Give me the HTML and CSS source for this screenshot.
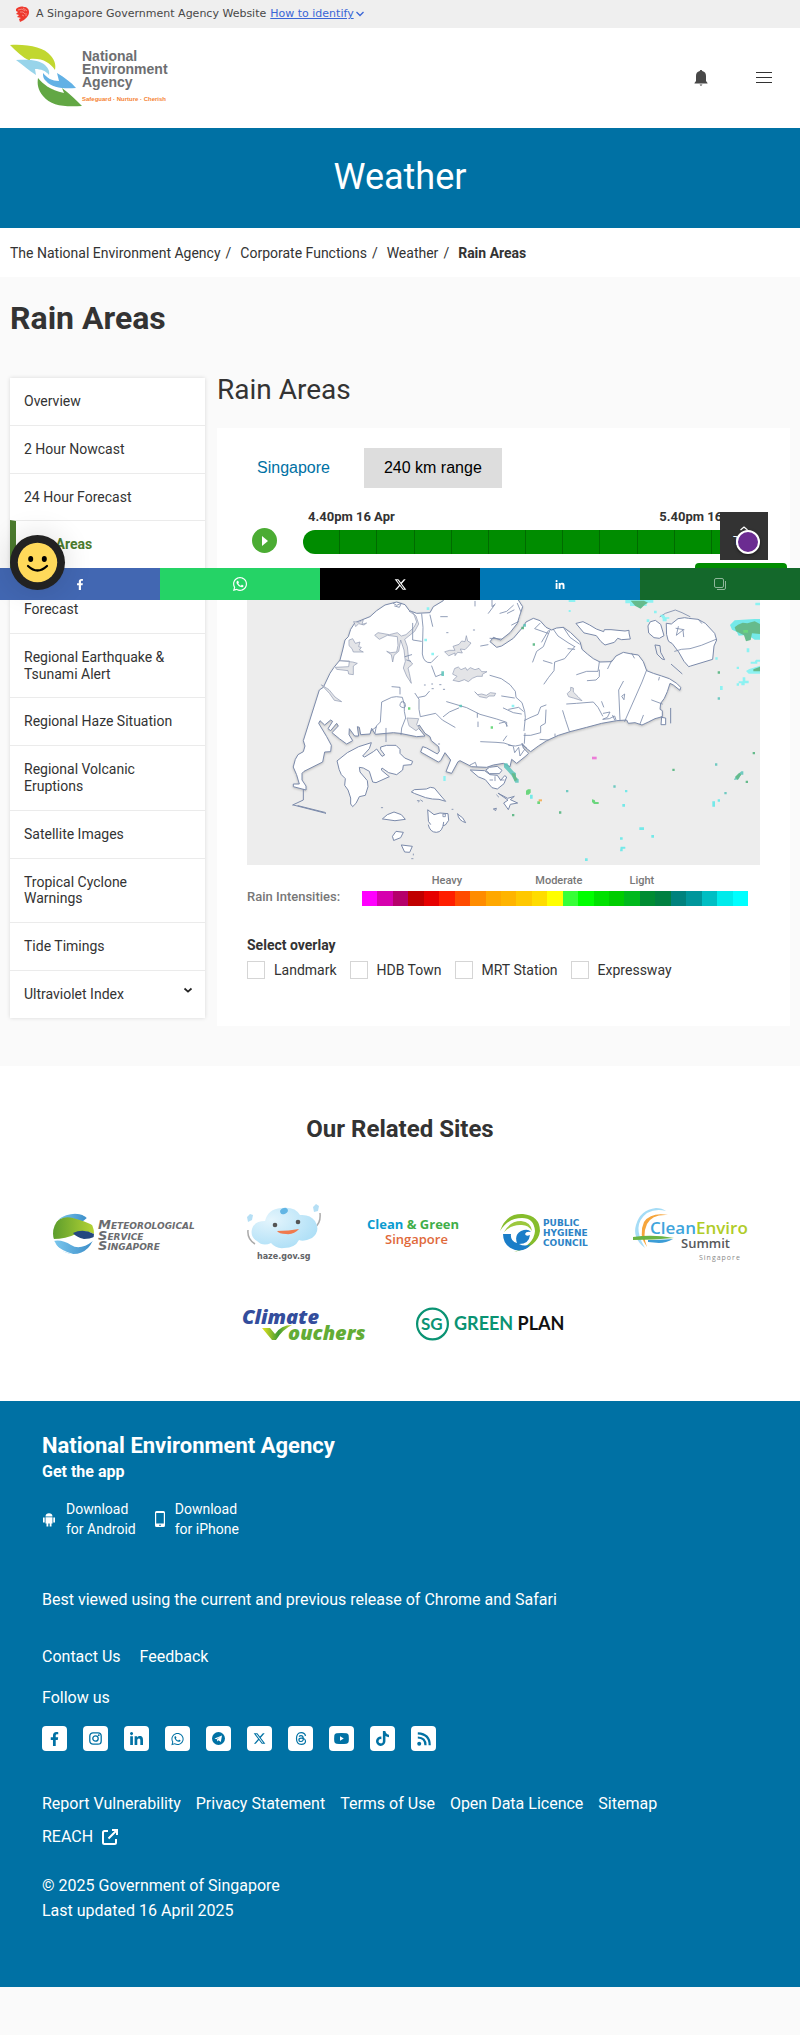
FILE: index.html
```html
<!DOCTYPE html>
<html lang="en">
<head>
<meta charset="utf-8">
<meta name="viewport" content="width=device-width, initial-scale=1">
<title>Rain Areas - National Environment Agency</title>
<link rel="stylesheet" href="styles.css">
</head>
<body>
<svg class="sprite" aria-hidden="true">
  <symbol id="i-facebook" viewBox="0 0 320 512"><path d="M279.14 288l14.22-92.66h-88.91v-60.13c0-25.35 12.42-50.06 52.24-50.06h40.42V6.26S260.43 0 225.36 0c-73.22 0-121.08 44.38-121.08 124.72v70.62H22.89V288h81.39v224h100.17V288z"/></symbol>
  <symbol id="i-whatsapp" viewBox="0 0 448 512"><path d="M380.9 97.1C339 55.1 283.2 32 223.9 32c-122.4 0-222 99.6-222 222 0 39.1 10.2 77.3 29.6 111L0 480l117.7-30.9c32.4 17.7 68.9 27 106.1 27h.1c122.3 0 224.1-99.6 224.1-222 0-59.3-25.2-115-67.1-157zm-157 341.6c-33.2 0-65.7-8.9-94-25.7l-6.7-4-69.8 18.3L72 359.2l-4.4-7c-18.5-29.4-28.2-63.3-28.2-98.2 0-101.7 82.8-184.5 184.6-184.5 49.3 0 95.6 19.2 130.4 54.1 34.8 34.9 56.2 81.2 56.1 130.5 0 101.8-84.9 184.6-186.6 184.6zm101.2-138.2c-5.5-2.8-32.8-16.2-37.9-18-5.1-1.9-8.8-2.8-12.5 2.8-3.7 5.6-14.3 18-17.6 21.8-3.2 3.7-6.5 4.2-12 1.4-32.6-16.3-54-29.1-75.5-66-5.7-9.8 5.7-9.1 16.3-30.3 1.8-3.7.9-6.9-.5-9.7-1.4-2.8-12.5-30.1-17.1-41.2-4.5-10.8-9.1-9.3-12.5-9.5-3.2-.2-6.9-.2-10.6-.2-3.7 0-9.7 1.4-14.8 6.9-5.1 5.6-19.4 19-19.4 46.3 0 27.3 19.9 53.7 22.6 57.4 2.8 3.7 39.1 59.7 94.8 83.8 35.2 15.2 49 16.5 66.6 13.9 10.7-1.6 32.8-13.4 37.4-26.4 4.6-13 4.6-24.1 3.2-26.4-1.3-2.5-5-3.9-10.5-6.6z"/></symbol>
  <symbol id="i-x" viewBox="0 0 512 512"><path d="M389.2 48h70.6L305.6 224.2 487 464H345L233.7 318.6 106.5 464H35.8L200.7 275.5 26.8 48H172.4L272.9 180.9 389.2 48zM364.4 421.8h39.1L151.1 88h-42L364.4 421.8z"/></symbol>
  <symbol id="i-linkedin" viewBox="0 0 448 448"><path d="M100.28 448H7.4V148.9h92.88zM53.79 108.1C24.09 108.1 0 83.5 0 53.8a53.79 53.79 0 0 1 107.58 0c0 29.7-24.1 54.3-53.79 54.3zM447.9 448h-92.68V302.4c0-34.7-.7-79.2-48.29-79.2-48.29 0-55.69 37.7-55.69 76.7V448h-92.78V148.9h89.08v40.8h1.3c12.4-23.5 42.69-48.3 87.88-48.3 94 0 111.28 61.9 111.28 142.3V448z"/></symbol>
  <symbol id="i-tiktok" viewBox="0 0 448 512"><path d="M448,209.91a210.06,210.06,0,0,1-122.77-39.25V349.38A162.55,162.55,0,1,1,185,188.31V278.2a74.62,74.62,0,1,0,52.23,71.18V0l88,0a121.18,121.18,0,0,0,1.86,22.17h0A122.18,122.18,0,0,0,381,102.39a121.43,121.43,0,0,0,67,20.14Z"/></symbol>
</svg>

<div class="gov-banner">
  <svg class="lion" viewBox="0 0 14 16" aria-hidden="true"><path d="M1 3C3 1 6 0 9 1c3 0 5 2 5 5 0 4-3 6-5 8l-4 2-1-3 2-1-4-1 2-2-3-1 2-2-2-1z" fill="#ee3a2e"/><path d="M3 4l4-1 3 2M5 6l3 0 2 2M7 9l2 1M8 2l4 3M11 7l0 3" stroke="#f8a9a0" fill="none" stroke-width=".7"/></svg>
  <span>A Singapore Government Agency Website</span>
  <a href="#identify">How to identify<svg class="chev" viewBox="0 0 8 6" aria-hidden="true"><path d="M.5 1L4 4.500 7.500 1" fill="none" stroke="#3a66d6" stroke-width="1.300"/></svg></a>
</div>

<header class="site-header">
  <a href="#home" aria-label="National Environment Agency home">
    <svg class="nea-logo" viewBox="0 0 164 64">
      <path d="M0 0C18-1 34 2 41 11c4 5 5 9 4 14-5-7-12-12-25-11v2C12 12 6 6 0 0z" fill="#c1d72f"/>
      <path d="M6 15c13-1 24 0 29 5 3 3 5 6 4 10-3-4-8-6-14-6l1 6C18 25 13 20 6 15z" fill="#98d4ea"/>
      <path d="M47 28c8 5 14 9 19 15-12 1-24 0-30-7-3-3-3-5-3-8 4 5 9 8 16 8z" fill="#62b1e5"/>
      <path d="M28 33c5 6 12 12 26 15l-2-5c8 6 14 12 20 18-18 1-31 0-39-10-5-6-6-12-5-18z" fill="#62a744"/>
      <g fill="#6d6e71" font-family="'Liberation Sans',Arial,sans-serif" font-weight="700" font-size="14"><text x="72" y="16">National</text><text x="72" y="29">Environment</text><text x="72" y="42">Agency</text></g>
      <text x="72" y="56" fill="#f58233" font-family="'Liberation Sans',Arial,sans-serif" font-weight="700" font-size="6">Safeguard · Nurture · Cherish</text>
    </svg>
  </a>
  <div class="header-tools">
    <button class="icon-btn" type="button" aria-label="Alerts"><svg width="14" height="16" viewBox="0 0 14 16"><path d="M7 0c.8 0 1.200.4 1.200 1.100C11 1.700 12 3.800 12 6v5l1.500 2v.5H.5V13L2 11V6C2 3.800 3 1.700 5.800 1.100 5.800.4 6.200 0 7 0zM5.500 14.500h3L7 16z" fill="#484848"/></svg></button>
    <button class="icon-btn" type="button" aria-label="Menu"><svg width="16" height="12" viewBox="0 0 16 12"><path d="M0 0h16v1H0zM0 5h16v1H0zM0 10h16v1H0z" fill="#333" shape-rendering="crispEdges"/></svg></button>
  </div>
</header>

<div class="hero">Weather</div>

<nav class="crumbs" aria-label="Breadcrumb">
  <ol>
    <li><a href="#home">The National Environment Agency</a></li>
    <li><a href="#functions">Corporate Functions</a></li>
    <li><a href="#weather">Weather</a></li>
    <li><b>Rain Areas</b></li>
  </ol>
</nav>

<main class="main">
  <h1>Rain Areas</h1>
  <div class="columns">
    <nav class="side" aria-label="Weather">
      <ul>
        <li><a href="#overview">Overview</a></li>
        <li><a href="#2h">2 Hour Nowcast</a></li>
        <li><a href="#24h">24 Hour Forecast</a></li>
        <li class="current"><a href="#rain">Rain Areas</a></li>
        <li><a href="#regional">Regional Weather Forecast</a></li>
        <li><a href="#earthquake">Regional Earthquake &amp; Tsunami Alert</a></li>
        <li><a href="#haze">Regional Haze Situation</a></li>
        <li><a href="#volcanic">Regional Volcanic Eruptions</a></li>
        <li><a href="#satellite">Satellite Images</a></li>
        <li><a href="#cyclone">Tropical Cyclone Warnings</a></li>
        <li><a href="#tide">Tide Timings</a></li>
        <li class="has-sub"><a href="#uv">Ultraviolet Index</a><svg class="sub-chev" viewBox="0 0 10 7" aria-hidden="true"><path d="M1.500 1.500L5 4.700l3.500-3.200" fill="none" stroke="#222" stroke-width="1.700"/></svg></li>
      </ul>
    </nav>

    <section class="content">
      <h2>Rain Areas</h2>
      <div class="panel">
        <div class="tabs">
          <button class="tab" type="button">Singapore</button>
          <button class="tab active" type="button">240 km range</button>
        </div>
        <div class="timeline">
          <button class="play" type="button" aria-label="Play"><svg width="6" height="10" viewBox="0 0 6 10"><path d="M0 0l6 5-6 5z" fill="#fff"/></svg></button>
          <div class="track">
            <div class="times"><span>4.40pm 16 Apr</span><span>5.40pm 16 Apr</span></div>
            <div class="bar"><i></i><i></i><i></i><i></i><i></i><i></i><i></i><i></i><i></i><i></i><i></i><i></i></div>
            <span class="bubble"></span>
          </div>
        </div>

        <svg class="map" viewBox="0 0 1539 864" role="img" aria-label="Rain map of Singapore">
          <rect width="1539" height="864" fill="#ededed"/>
          <g transform="translate(-51 39)" stroke-linejoin="round" stroke-linecap="round">
            <g fill="#fff" stroke="#7b8aaa" stroke-width="3">
              <path class="coast" d="M190 530L196 508 204 494 220 485 225 468 220 452 268 300 280 292 300 250 312 232 330 210 338 180 345 150 355 140 362 118 375 98 395 90 420 80 440 62 465 45 500 36 525 44 538 62 560 70 600 68 610 50 640 32 640 -40 860 -40 865 30 878 50 868 80 862 100 840 128 812 150 790 142 780 155 800 172 815 168 850 145 880 110 888 96 910 85 930 92 948 112 965 120 980 114 1000 112 1022 128 1050 155 1056 178 1072 192 1090 206 1110 216 1145 215 1158 198 1180 187 1205 192 1225 195 1240 215 1250 242 1270 250 1295 258 1318 266 1340 280 1352 292 1350 301 1330 285 1320 280 1312 305 1303 325 1292 340 1290 358 1297 362 1297 380 1275 386 1255 396 1236 405 1215 398 1195 400 1190 390 1160 392 1115 400 1070 412 1020 425 985 436 950 452 925 468 902 485 888 474 876 460 880 474 896 490 885 500 860 520 845 508 840 530 820 520 790 525 770 532 725 530 690 512 684 515 665 550 648 545 662 510 645 488 632 512 625 516 572 486 578 470 590 474 622 492 628 484 626 470 604 452 600 440 585 430 568 405 562 410 585 438 560 440 510 430 490 428 436 433 425 415 420 432 392 434 388 412 382 410 386 438 374 438 358 416 357 434 368 452 350 462 328 446 306 428 325 408 320 400 302 422 294 416 308 394 302 390 284 405 270 392 266 400 290 440 304 466 302 485 284 486 278 516 222 544 216 550 216 570 228 588 228 600 190 590 190 582 208 582 200 555z"/>
              <path d="M322 512l30-24 34-18 38-12-6 18-20 22 6 3 26-16 10-8 16 22 8-4-12-16 0-8 18-5 28 0 12 12 0 12 14 14 24 10-4 10-24 2-2 14-18 14-24-6-20-14-2 6 14 12 10 8-40 18-10-2-10-32-18-10-12-2 2 14 22 26 2 18-8 26-18 4-10 20-10 10-6-8 0-18-8-24-10-14 2-20-12-12-6-14z"/>
              <path d="M545 605l8-6 36-2 12-5 12 2 20 24 14 16-20-6-20-1-20-4-32-12z"/><path d="M594 660l18 14 18-5 24 2 2 20-10 14-20 6-20-2-10-14z"/><path d="M595 705q5 22 24 22t22-30M683 672q18 10 24 26-22-6-24-26"/>
              <path d="M458 686l14-12 20-8 22 8 12 14-30 4zM488 738l10-14 22 3-8 16-20 8zM515 765l32 4-8 18-14-1z"/>
              <path d="M722 540l42 2 16 12 22 2 10 15 12-14 6 4-8 20-20 16-16-4-20-24-20-8zM768 540l10-8 24-3 14 12-8 10-28 0z"/>
              <path d="M1039 100l20-5 20 10 20 12 22 8 2-6 20 0 42 4 12-2 0 8 4 18-26 2-12-4-10 12-28 8-12-10-14-18-36-8z"/>
              <path d="M1262 95l14-4 16 12 6 20 4 14-14 8-16-2-16-14-2-20z"/>
              <path d="M1310 100l14 2 20-16 20-3 12 2 28 3 22 12 28 30 6 20-8 18-4 40-66 20-6 2-14-16-16-28-20-26-8-4-4-6-4-16z"/>
              <path d="M1276 165l14 2 2 20 12 22-8-2-14-14zM1324 223l32 28M188 645l32-15 0-32M190 645l98 25-4-3-80-20" fill="none"/>
              <path d="M1295 380l-2 24h14l0-20-14-2M1322 355v44M805 610l28 15 20-6-12 10 22 10-22 4-6 16-14-20 12-8zM798 655l-8 2 6 4z"/>
            </g>
            <g fill="#e3e4e7" stroke="#8c97b0" stroke-width="2">
              <path d="M538 64l14 10 8 22-8 16-24 22-14 4-12-10-24 6-34-6-10 8 14 12 24-12 30 4 2 26-4 20-18 2-12-4 14 10 4 22 4-20 14-12 6-34 10 30 4 34-6 20 10 24 14 22-6-30-4-16 14-12-12-14-4-38-8-22 30-24 12-22-8-24-12-12z"/>
              <path d="M328 212l40 4 14 4-12 8 0 26-14-2-2-10-34-4-4-6 40-2 2-16z"/>
              <path d="M358 150l10-4 8 14 14-4-4 14 8 2-6 8 12 6-30 0-4-10-8-8z"/>
              <path d="M645 185l14-4 16 0-6-12 18-6 8-10 10 2 4-18 4 16 10 6-8 10-10 10-14-2 6 12-14-2-8 10 0-8-18 8zM675 235l10-4 8 8 14-6 4 8 10-8 14 6 12-4 8 10 16 0-14 8 0 6-16 0-14 6-12 10-12-6-16 6-18-4 12-12-12-6z"/>
              <path d="M735 306l8 8 12-2 14 4 12-8 16 2-4 8-16 0-8 6-20-4zM372 95l14 2 14-8-4 14 14-4-8 6-16-4-8 8zM532 384l34 2-6 18 8 10-10 8-20-14zM275 285l22 14 18 22 20 14-22-4-14-20zM1022 300l0-8 8 2 0 12 14 14 12 12-26-8-14-4-4-8z"/>
            </g>
            <g fill="none" stroke="#7b8aaa" stroke-width="2.500">
              <path d="M575 72l4 40-2 80q4 28 26 26l20-20M605 228l12 32 20-8M548 100v50l26 4"/>
              <path d="M435 430l4-22 12-12 4-60 30-14 14-2 18 2 6 22 0 20 4 20-12 30-2 20M468 455l0-40M486 290l24 2 0 20M514 336q10-4 12 8t-10 8-2-16"/>
              <path d="M780 256l34 10 26 18 16 20 2 18 18 16 8 26 2 18-4 40M815 318l38 6M820 354l30 14 24 4M836 358l30-6 14 12M555 310l12 18 0 30 4 22 46-10 20 20 38 22M566 322l20-4 12-14M650 335l60 18 40 20 50 14 30 10 0 12M640 380l18-14 28-12M752 455l46 2 24 2 24 8"/>
              <path d="M742 370v12M744 396v14M808 400l16-4 8 12M820 452l10-14M836 466l20 2 20-4 14 10M850 470l4 18 12-16 4 26 14-20M632 80l20 0M600 75l8 34M735 34v14M775 70l18-24M786 30l0 20 10-8M810 70l20-6 20-18"/>
              <path d="M752 168l22-4M780 145l34 2M832 70l20-10M845 105l20-10"/>
              <path d="M960 120l-20 50-20 14-12 32M930 100l-16 16 40 14M955 122l-20 34M970 118l14 20 30 20 20 12M1000 112l20 30 28 20M1034 170l-14 16-16 20-30 10-2 26-16 20-14 20M1034 178l-20-2M940 212l26 8M1108 216l-4 28-34 0-30 10M1108 240l0 20-10 10-26 2M1145 212l-12 24"/>
              <path d="M1250 240l-14 36-52 118M1180 274l-14 26 4 90M1176 318l8-6-2 16zM1240 376l-10 26M1265 330l32 12M1288 262l-2 8M1205 190l8 14M1010 342l30-2 50-4 14 16 14 26M998 362l8 26 12 36M948 345l-16 6-8 22-24 10-16 8M948 360l-2 40-14 8 0 20-30 8-20 0"/>
              <path d="M1120 370l20-4-8 16-14 6 20-2 16-8 4 12M1115 335l6 16M1148 376l6 14M1334 184l20-6 26-2 34-10 44-18M1338 115l24 4M1345 110l-6 26 20-16 2 20M1290 80l16-10 30-10 20 8 24 12M1405 88l10 12M930 448l24 2M975 432v6M885 430l-2 30M862 40l10 24M490 40l10 6 14-6-6 12-14-4M525 200l20-6M530 210l12 4"/>
              <path d="M650 128h4M730 120h4M583 285h3M605 282h3M606 296h4M629 284h4M640 298h4M454 653h4M666 658h3M545 806h4M550 792v3M625 462h4M562 632h6l-2 4M572 630l6 4M720 525l16-8 4 12M780 570h8M795 560v12M812 570h10M440 410l-16 12M640 672h6v8h-6zM800 615l6 6"/>
            </g>
            <g opacity=".85">
              <path fill="#7df3f3" d="M590 52h8v8h-8zM583 146h8v8h-8zM604 188h8v8h-8zM845 344h8v8h-8zM640 558h7v15h-7zM1016 60h6v6h-6zM1016 30h20v6h-20zM1186 30h84v8h-20v10h-50v-8h-14zM1250 88h8v8h-8zM1272 62h8v8h-8zM1290 74h12l4 8h12v4h-8v8h-12v-8zM1456 202h7v7h-7zM1470 288h8v12h-8zM1562 215h12l4-6h14v6h-10v6h-20zM1548 243l10-6 32-10v24h-34zM1538 262h8v10h10v8h-12v6h-10v-6h-8v-6h12zM1520 280h7v7h-7zM1520 230h7v7h-7zM1550 175h8v12h-8zM1576 38h14v8h-14z"/>
              <path fill="#5fe9e9" d="M1500 105l14-14 60-4h16v62h-16l-12-8-16-6-20 2-6-12-14-6zM900 614h8v12h-8zM1185 600h7v7h-7zM1177 642h8v8h-8zM1264 735h8v8h-8zM1170 742h8v7h-8zM1065 805h8v8h-8zM1172 770h14v6h-8v8h-8zM1228 712h14v8h-14zM1447 634h8v16h-8zM1463 628h7v7h-7z"/>
              <path fill="#5bc4ba" d="M1534 544h6v10h-8l-6 14-14 2 4-10zM1008 600h7v7h-7zM1150 586h7v7h-7zM1455 520h7v7h-7zM1483 606h7v7h-7zM1463 322h7v7h-7zM688 344h8v8h-8zM634 244h8v14h-8zM880 102h8v8h-8zM822 520h10l6 10 12 14 8 6v12l8 6v10h-10l-6-12-6-10-12-14-10-10z"/>
              <path fill="#4fb37c" d="M1514 112l10-8 14-6 14 2 22-6 16 8v30l-24-2-4 20-14 4-6-18-24-12zM1202 32h40l12 6-10 6-12 12-16-8zM908 160h7v7h-7zM1463 244h7v7h-7zM1327 536h7v7h-7zM1547 572h7v7h-7zM1568 486h7v7h-7zM987 664h7v7h-7zM846 672h7v7h-7zM1516 560l12-12 6 6-12 16zM844 550h10l8 20-8 4zM874 110h8v8h-8zM1570 238l20-8v14h-20z"/>
              <path fill="#55d26a" d="M888 602l6-4h8v10l-6 6h-8zM1086 628l8 2 2 6h10v6h-14l-6-6zM534 352h7v7h-7zM782 409h7v7h-7zM922 634h8v8h-8zM1540 120h14v8h-14z"/>
              <path fill="#ec6ad5" d="M1086 500h14v8h-14z"/><path fill="#f5a84a" d="M926 628h10v6h-10z"/>
            </g>
          </g>
        </svg>

        <div class="legend">
          <div class="legend-title">Rain Intensities:</div>
          <div>
            <div class="levels"><span>Heavy</span><span>Moderate</span><span>Light</span></div>
            <div class="scale">
              <i style="background:#f0f"></i><i style="background:#d600ae"></i><i style="background:#b5006a"></i><i style="background:#c00000"></i><i style="background:#e60000"></i><i style="background:#ff1e00"></i><i style="background:#ff4b00"></i><i style="background:#ff8c00"></i><i style="background:#ffa800"></i><i style="background:#ffb400"></i><i style="background:#ffc800"></i><i style="background:#ffdc00"></i><i style="background:#ff0"></i><i style="background:#37ff37"></i><i style="background:#0f0"></i><i style="background:#00e100"></i><i style="background:#00cd00"></i><i style="background:#00b91c"></i><i style="background:#008c32"></i><i style="background:#008041"></i><i style="background:#00827d"></i><i style="background:#00969b"></i><i style="background:#00bec3"></i><i style="background:#00ebeb"></i><i style="background:#0ff"></i>
            </div>
          </div>
        </div>

        <fieldset class="overlay">
          <legend>Select overlay</legend>
          <div class="checks">
            <label><input type="checkbox">Landmark</label>
            <label><input type="checkbox">HDB Town</label>
            <label><input type="checkbox">MRT Station</label>
            <label><input type="checkbox">Expressway</label>
          </div>
        </fieldset>
      </div>
    </section>
  </div>
</main>

<section class="related">
  <h2>Our Related Sites</h2>
  <div class="sites">
    <a href="#mss" aria-label="Meteorological Service Singapore"><svg width="154" height="60" viewBox="0 0 154 60">
      <defs><clipPath id="globe"><circle cx="20.500" cy="30.500" r="20.500"/></clipPath><linearGradient id="lg" x2="1"><stop stop-color="#5c9d2c"/><stop offset="1" stop-color="#b5d334"/></linearGradient><linearGradient id="bl" x2="1"><stop stop-color="#7cc8ee"/><stop offset="1" stop-color="#3a8cc8"/></linearGradient></defs>
      <g clip-path="url(#globe)"><path d="M4 17Q20 6 35 14l-6 5Q16 12 4 17z" fill="url(#bl)"/><path d="M0 36V22Q8 12 20 15t21 8v8q-8-5-18 0T0 36z" fill="url(#lg)"/><path d="M20 30q10-5 21 1v3q-4 2-10 2-8-2-11-6z" fill="#24477f"/><path d="M0 38q9-2 18 4t22-4v5Q31 54 20 51T0 40z" fill="url(#bl)"/><path d="M4 46q12 5 22 7l-6 5-14-5z" fill="#8fd2f2"/><path d="M20 55l8-1-5 3z" fill="#24477f"/></g>
      <g fill="#6b6c6f" font-family="'DejaVu Sans',sans-serif" font-weight="700" font-style="italic"><text x="45" y="26" font-size="13">M<tspan font-size="9">ETEOROLOGICAL</tspan></text><text x="45" y="37" font-size="13">S<tspan font-size="9">ERVICE</tspan></text><text x="45" y="47" font-size="13">S<tspan font-size="9">INGAPORE</tspan></text></g>
    </svg></a>
    <a href="#hazegov" aria-label="haze.gov.sg"><svg width="82" height="60" viewBox="0 0 82 60">
      <defs><radialGradient id="cl" cx=".3" cy=".3" r=".9"><stop stop-color="#e4f5fd"/><stop offset="1" stop-color="#a4dbf5"/></radialGradient></defs>
      <path d="M10 41q-8-5-7-14M70 24q6-4 5-14" fill="none" stroke="#aaa" stroke-width="1.500"/><path d="M2 14l3-3 3 1-1 5-4 2zM68 4l3-3 3 2-1 5-4 1z" fill="#b5dff5"/>
      <path d="M12 38q-7-4-5-12 2-8 13-8 3-12 16-13 14-2 19 7 10-1 15 6 6 10-3 17-8 4-13 2-4 8-15 8-8 1-13-5-8 4-14-2z" fill="url(#cl)"/><ellipse cx="39" cy="8" rx="4" ry="3" fill="#62b5e4" transform="rotate(-25 39 8)"/>
      <circle cx="30" cy="22" r="2.300" fill="#555"/><circle cx="53" cy="19" r="2.300" fill="#555"/><path d="M32 28q12 0 22-2-5 6-13 5-7 0-9-3z" fill="#f07a4e"/>
      <text x="12" y="56" font-family="'DejaVu Sans',sans-serif" font-weight="700" font-size="8" fill="#626366">haze.gov.sg</text>
    </svg></a>
    <a href="#cgs" aria-label="Clean and Green Singapore"><svg width="97" height="60" viewBox="0 0 97 60"><g font-family="'Open Sans',sans-serif" font-weight="700" font-size="13"><text x="2" y="26" fill="#0a9bd0">Clean <tspan fill="#3fae49">&amp; Green</tspan></text><text x="20" y="41" fill="#e0693a" font-weight="600">Singapore</text></g></svg></a>
    <a href="#phc" aria-label="Public Hygiene Council"><svg width="92" height="60" viewBox="0 0 92 60">
      <path d="M0 28Q6 10 23 11q17 2 17 17Q38 44 14 49 34 42 35 28 34 15 22 15 8 15 0 28z" fill="#86bd2c"/><path d="M4 29q6-11 17-11 10 1 11 10-4-7-12-6-9 0-16 7z" fill="#9cc83e"/>
      <path d="M3 31h8q-1 7 6 9-3-8 4-12 7-3 10 1-5-1-6 2 1 3 5 1-1 9-11 9 6 3 12 0-5 8-16 6Q3 43 3 31z" fill="#1a7dc8"/>
      <g fill="#2c83c6" font-family="'DejaVu Sans',sans-serif" font-size="9" font-weight="700"><text x="43" y="23">PUBLIC</text><text x="43" y="33">HYGIENE</text><text x="43" y="43">COUNCIL</text></g>
    </svg></a>
    <a href="#ces" aria-label="CleanEnviro Summit Singapore"><svg width="118" height="60" viewBox="0 0 118 60">
      <path d="M15 45Q2 35 6 22 10 7 26 5q6 0 10 3-10-3-19 2Q1 22 15 45z" fill="#a5dcf6"/><path d="M17 44Q8 32 14 19q7-10 24-7-16-1-21 9-5 11 0 23z" fill="#f6a53c"/>
      <path d="M3 34q20-3 41 1-20 2-41 2z" fill="#6ab344"/><path d="M18 37q10 0 25-1-7 4-14 4l-11-1z" fill="#3c9dd7"/>
      <g font-family="'Open Sans',sans-serif" font-weight="600"><text x="20" y="31" font-size="17" fill="#3fa5dc">Clean<tspan fill="#b0cc28">Enviro</tspan></text><text x="51" y="45" font-size="13" fill="#58595b">Summit</text></g><text x="69" y="57" font-family="'Open Sans',sans-serif" font-size="7" fill="#888" class="spaced">Singapore</text>
    </svg></a>
    <a href="#cv" aria-label="Climate Vouchers"><svg width="142" height="34" viewBox="0 0 142 34">
      <defs><linearGradient id="ck" x2="1"><stop stop-color="#e7e51c"/><stop offset=".55" stop-color="#3f9a35"/><stop offset="1" stop-color="#c4d92b"/></linearGradient></defs>
      <g font-family="'Open Sans',sans-serif" font-weight="800" font-style="italic"><text x="6" y="17" fill="#334d9c" font-size="20">Climate</text><path d="M26 21h8l5 6q6-9 17-9Q47 22 40 33h-4z" fill="url(#ck)"/><text x="52" y="33" fill="#62ac35" font-size="20">ouchers</text></g>
    </svg></a>
    <a href="#greenplan" aria-label="SG Green Plan"><svg width="149" height="34" viewBox="0 0 149 34">
      <circle cx="16.500" cy="17" r="15.400" fill="none" stroke="#0a9373" stroke-width="2.200"/><text x="5" y="23" fill="#0a9373" font-family="Lato,sans-serif" font-weight="700" font-size="17">SG</text><text x="38" y="23" fill="#0a9373" font-family="Lato,sans-serif" font-weight="700" font-size="18">GREEN <tspan fill="#111">PLAN</tspan></text>
    </svg></a>
  </div>
</section>

<footer class="footer">
  <h2>National Environment Agency</h2>
  <h3>Get the app</h3>
  <div class="apps">
    <a href="#android"><svg width="14" height="15" viewBox="0 0 14 15"><path d="M3.500 4.500C3.500 2.500 5 1.300 7 1.300s3.500 1.200 3.500 3.200zM3.500 5.200h7v6.300h-1V14.500H7.700v-3H6.300v3H4.500v-3h-1zM1 5.500h1.700v5H1zM11.300 5.500H13v5h-1.700zM4.500.5l1 1M9.500.5l-1 1" fill="#fff"/></svg><span>Download<br>for Android</span></a>
    <a href="#iphone"><svg width="10" height="16" viewBox="0 0 10 16"><path fill-rule="evenodd" d="M1.500 0h7Q10 0 10 1.500v13Q10 16 8.500 16h-7Q0 16 0 14.500v-13Q0 0 1.500 0zM1.200 2v10.500h7.600V2zM4 13.700v1h2v-1z" fill="#fff"/></svg><span>Download<br>for iPhone</span></a>
  </div>
  <p class="best">Best viewed using the current and previous release of Chrome and Safari</p>
  <div class="links contact"><a href="#contact">Contact Us</a><a href="#feedback">Feedback</a></div>
  <p class="follow">Follow us</p>
  <div class="social">
    <a href="#fb" aria-label="Facebook"><svg width="9" height="14"><use href="#i-facebook"/></svg></a>
    <a href="#ig" aria-label="Instagram"><svg width="13" height="13" viewBox="0 0 13 13"><g fill="none" stroke="#0071a4" stroke-width="1.300"><rect x=".8" y=".8" width="11.400" height="11.400" rx="3.200"/><circle cx="6.500" cy="6.500" r="2.700"/></g><circle cx="9.800" cy="3.200" r=".9"/></svg></a>
    <a href="#li" aria-label="LinkedIn"><svg width="13" height="13"><use href="#i-linkedin"/></svg></a>
    <a href="#wa" aria-label="WhatsApp"><svg width="13" height="14"><use href="#i-whatsapp"/></svg></a>
    <a href="#tg" aria-label="Telegram"><svg width="13" height="13" viewBox="0 0 13 13"><circle cx="6.500" cy="6.500" r="6.500"/><path d="M2.500 6.500l7.500-3-1.200 6.500-2.300-1.700-1.200 1.200-.3-2L8 5 4.300 7.200z" fill="#fff"/></svg></a>
    <a href="#x" aria-label="X"><svg width="13" height="13"><use href="#i-x"/></svg></a>
    <a href="#threads" aria-label="Threads"><svg width="12" height="13" viewBox="0 0 12 13"><path d="M10.500 4C10 1.700 8.500.7 6.200.7 3 .7 1.500 2.900 1.500 6.500s1.500 5.800 4.700 5.800c2.500 0 4.300-1.300 4.300-3.100C10.500 7.200 8.500 6.200 6.300 6.200c-1.400 0-2.400.7-2.400 1.700s.9 1.600 2 1.600C7.800 9.500 8.500 8 8.300 6.200 8.100 4.500 7.300 3.600 6 3.600c-.9 0-1.500.4-1.900 1" fill="none" stroke="#0071a4" stroke-width="1.200"/></svg></a>
    <a href="#yt" aria-label="YouTube"><svg width="15" height="11" viewBox="0 0 15 11"><path fill-rule="evenodd" d="M2.500.3Q7.500-.2 12.500.3 14.500.6 14.700 2.500 15 5.500 14.700 8.500 14.500 10.400 12.500 10.700 7.500 11.200 2.500 10.700.5 10.400.3 8.500 0 5.500.3 2.500.5.6 2.500.3zM6 3.300v4.400l3.800-2.200z"/></svg></a>
    <a href="#tt" aria-label="TikTok"><svg width="13" height="15"><use href="#i-tiktok"/></svg></a>
    <a href="#rss" aria-label="RSS"><svg width="14" height="14" viewBox="0 0 14 14"><circle cx="2.200" cy="11.800" r="2"/><path d="M.8 5.500q7.700.2 7.700 7.700M.8 1.300q12 .6 11.900 11.900" fill="none" stroke="#0071a4" stroke-width="2.200"/></svg></a>
  </div>
  <div class="links legal"><a href="#report">Report Vulnerability</a><a href="#privacy">Privacy Statement</a><a href="#terms">Terms of Use</a><a href="#data">Open Data Licence</a><a href="#sitemap">Sitemap</a><a class="ext" href="#reach">REACH<svg width="16" height="16" viewBox="0 0 16 16"><path d="M6 2H2.500Q1 2 1 3.500v10Q1 15 2.500 15h10q1.500 0 1.500-1.500V10M10 1h5v5M15 1L6.500 9.500" fill="none" stroke="#fff" stroke-width="2"/></svg></a></div>
  <p class="copy">© 2025 Government of Singapore<br>Last updated 16 April 2025</p>
</footer>

<a class="to-top" href="#top"><svg width="8" height="5" viewBox="0 0 8 5" aria-hidden="true"><path d="M.5 4L4 1l3.500 3" fill="none" stroke="#fff" stroke-width="1.300"/></svg>Top</a>
<button class="dot" type="button" aria-label="Assistant"></button>
<div class="share">
  <a class="s-fb" href="#share-fb" aria-label="Share on Facebook"><svg width="8" height="11"><use href="#i-facebook"/></svg></a>
  <a class="s-wa" href="#share-wa" aria-label="Share on WhatsApp"><svg width="14" height="16"><use href="#i-whatsapp"/></svg></a>
  <a class="s-x" href="#share-x" aria-label="Share on X"><svg width="13" height="13"><use href="#i-x"/></svg></a>
  <a class="s-li" href="#share-li" aria-label="Share on LinkedIn"><svg width="10" height="9"><use href="#i-linkedin"/></svg></a>
  <button class="s-cp" type="button" aria-label="Copy link"><svg width="12" height="12" viewBox="0 0 12 12"><g fill="none" stroke="#8fb79a"><rect x=".5" y=".5" width="9" height="9" rx="1.500"/><path d="M11.500 3v7q0 1.500-1.500 1.500H3"/></g></svg></button>
</div>
<button class="smiley" type="button" aria-label="Ask a question"><svg viewBox="0 0 55 55"><circle cx="27.500" cy="27.500" r="27.500" fill="#222"/><circle cx="27.500" cy="27.500" r="19.700" fill="#ffd95a"/><ellipse cx="20.700" cy="24" rx="2.500" ry="3"/><ellipse cx="34.300" cy="24" rx="2.500" ry="3"/><path d="M18 31q9.500 9 19 0" fill="none" stroke="#000" stroke-width="2.200" stroke-linecap="round"/></svg></button>
</body>
</html>
```

FILE: styles.css
```css
* { box-sizing: border-box; }
body {
  position: relative;
  margin: 0;
  padding-bottom: 48px;
  background: #fafafa;
  color: #333;
  font: 14px/20px Roboto, "Liberation Sans", sans-serif;
}
a { color: inherit; text-decoration: none; }
button { margin: 0; padding: 0; border: 0; background: none; font: inherit; cursor: pointer; }
h1, h2, h3, p, ul, ol { margin: 0; padding: 0; }
ul, ol { list-style: none; }
svg { display: block; overflow: visible; }
.sprite { position: absolute; width: 0; height: 0; }

/* Government banner */
.gov-banner {
  display: flex;
  align-items: center;
  gap: 4px;
  height: 28px;
  padding: 0 15px;
  background: #efefef;
  color: #484848;
  font: 11px/20px "DejaVu Sans", sans-serif;
}
.gov-banner a { color: #3a66d6; text-decoration: underline; }
.lion { width: 14px; height: 16px; margin-right: 3px; }
.chev { display: inline-block; width: 8px; height: 6px; margin-left: 2px; }

/* Header */
.site-header {
  display: flex;
  justify-content: space-between;
  align-items: center;
  height: 100px;
  padding: 0 28px 3px 10px;
  background: #fff;
}
.nea-logo { width: 164px; height: 64px; }
.header-tools { display: flex; align-items: center; gap: 48px; padding-top: 3px; }
.hero { height: 100px; background: #0071a4; color: #fff; font-size: 36px; line-height: 98px; text-align: center; }
.crumbs { padding: 15px 10px 14px; background: #fff; }
.crumbs ol { display: flex; flex-wrap: wrap; }
.crumbs li:not(:last-child)::after { content: "/"; margin: 0 9px 0 5px; }

/* Main */
.main { padding: 21px 10px 40px; }
h1 { margin-bottom: 32px; font-size: 32px; line-height: 40px; }
.columns { display: grid; grid-template-columns: 195px minmax(0, 1fr); gap: 12px; align-items: start; }
.side { margin-top: 8px; background: #fff; box-shadow: 0 0 4px rgba(0, 0, 0, .14); line-height: 1.2; }
.side li { position: relative; }
.side li + li { border-top: 1px solid #ebebeb; }
.side a { display: block; padding: 15px 28px 15px 14px; }
.side .current { border-left: 6px solid #4b7b2e; }
.side .current a { padding-left: 8px; color: #4b7b2e; font-weight: 700; }
.sub-chev { position: absolute; top: 16px; right: 12px; width: 10px; height: 7px; }
.content h2 { margin-bottom: 18px; font-size: 28px; font-weight: 400; line-height: 40px; }
.panel { padding: 20px 30px 46px; background: #fff; }

.tabs { display: flex; gap: 14px; margin-left: -10px; }
.tab { height: 40px; padding: 0 20px; color: #0071a4; font: 16px/20px "Liberation Sans", Arial, sans-serif; }
.tab.active { background: #ddd; color: #000; }

.timeline { display: grid; grid-template-columns: 25px minmax(0, 1fr); gap: 26px; align-items: end; margin-top: 21px; padding: 0 12px 0 5px; }
.play { display: flex; justify-content: center; align-items: center; width: 25px; height: 25px; margin-bottom: 1px; padding-left: 1px; border-radius: 50%; background: #4bac33; }
.track { position: relative; }
.times { display: flex; justify-content: space-between; margin-bottom: 5px; padding: 0 2px 0 5px; font-size: 13px; font-weight: 700; line-height: 16px; }
.bar { display: flex; height: 24px; border-radius: 12px; background: #008c00; overflow: hidden; }
.bar i { flex: 1; }
.bar i + i { border-left: 1px solid #006b00; }
.bubble { position: absolute; top: 54px; right: -39px; width: 92px; height: 26px; border-radius: 4px; background: #008c00; }

.map { width: 100%; height: auto; margin-top: 23px; overflow: hidden; }
.coast { filter: drop-shadow(0 3px 3px rgba(0, 0, 0, .2)); }

.legend { display: grid; grid-template-columns: 115px minmax(0, 1fr); align-items: end; margin-top: 9px; padding-right: 12px; color: #777; font-weight: 500; line-height: 14px; }
.legend-title { font-size: 13px; margin-bottom: 2px; }
.levels { display: grid; grid-template-columns: 44% 14% 29%; margin-bottom: 3px; font-size: 11px; text-align: center; }
.scale { display: flex; height: 15px; }
.scale i { flex: 1; }

.overlay { margin: 29px 0 0; padding: 0; border: 0; }
.overlay legend { margin-bottom: 5px; padding: 0; font-weight: 700; }
.checks { display: flex; flex-wrap: wrap; gap: 13px; }
.checks label { display: flex; align-items: center; gap: 9px; }
.checks input { appearance: none; width: 18px; height: 18px; margin: 0; border: 1px solid #d5d5d5; background: #fff; }

/* Related sites */
.related { padding: 47px 40px 60px; background: #fff; }
.related h2 { margin-bottom: 58px; font-size: 24px; line-height: 32px; text-align: center; }
.sites { display: flex; flex-wrap: wrap; justify-content: center; gap: 44px 38px; }
.spaced { letter-spacing: 1px; }

/* Footer */
.footer { padding: 31px 42px 64px; background: #0071a4; color: #fff; font-size: 16px; line-height: 24px; }
.footer h2 { font-size: 22px; line-height: 28px; }
.footer h3 { font-size: 16px; }
.apps { display: flex; gap: 19px; margin-top: 15px; font-size: 14px; line-height: 20px; }
.apps a { display: flex; align-items: center; gap: 10px; }
.best { margin-top: 49px; }
.links { display: flex; flex-wrap: wrap; gap: 9px 15px; }
.contact { gap: 19px; margin-top: 33px; }
.follow { margin-top: 17px; }
.social { display: flex; flex-wrap: wrap; gap: 16px; margin-top: 16px; }
.social a { display: flex; justify-content: center; align-items: center; width: 25px; height: 25px; border-radius: 4px; background: #fff; fill: #0071a4; }
.legal { margin-top: 41px; padding-right: 64px; }
.ext { display: flex; align-items: center; gap: 9px; }
.copy { margin-top: 24px; line-height: 25px; }

/* Floating controls */
.to-top { position: absolute; top: 512px; right: 32px; display: flex; flex-direction: column; align-items: center; gap: 2px; width: 48px; height: 48px; padding-top: 14px; background: #333; color: #fff; font-size: 13px; line-height: 16px; }
.dot { position: absolute; top: 530px; right: 40px; width: 24px; height: 24px; border: 2px solid #fff; border-radius: 50%; background: #6b2c91; box-shadow: 0 1px 3px rgba(0, 0, 0, .5); }
.share { position: absolute; top: 568px; left: 0; right: 0; display: grid; grid-template-columns: repeat(5, 1fr); height: 32px; fill: #fff; }
.share > * { display: flex; justify-content: center; align-items: center; }
.s-fb { background: #4267b2; }
.s-wa { background: #25d366; }
.s-x { background: #000; }
.s-li { background: #0077b5; }
.s-cp { background: #14682b; }
.smiley { position: absolute; top: 535px; left: 10px; width: 55px; height: 55px; border-radius: 50%; box-shadow: 0 0 30px rgba(0, 0, 0, .14); }
```
